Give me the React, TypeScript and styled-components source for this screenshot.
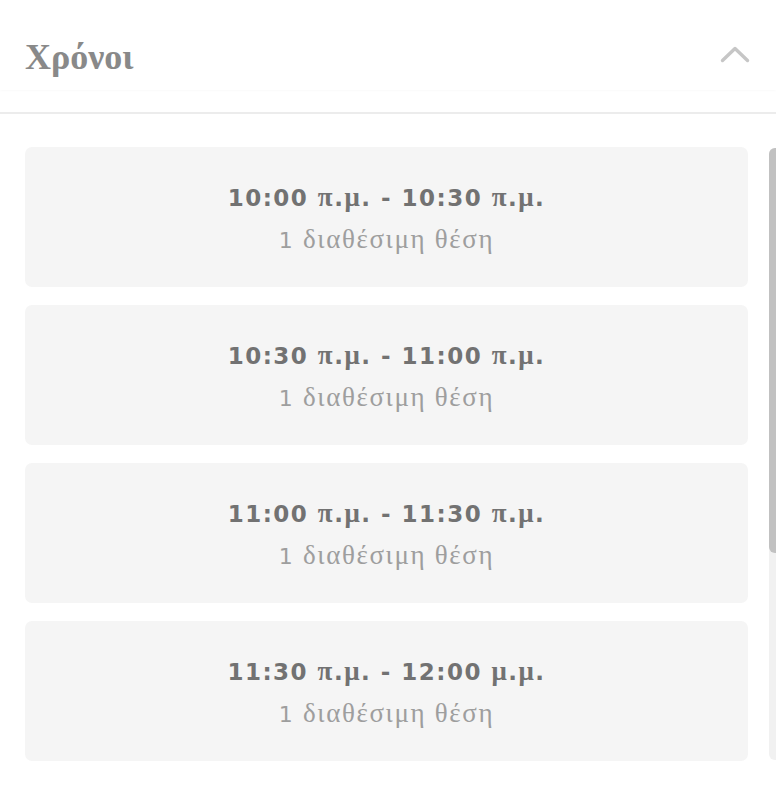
import React from "react";
import styled, { createGlobalStyle } from "styled-components";

const GlobalStyle = createGlobalStyle`
  html, body { margin: 0; padding: 0; background: #ffffff; }
  body { font-family: "DejaVu Sans", "Liberation Sans", sans-serif; }
  * { box-sizing: border-box; }
`;

const Panel = styled.div`
  width: 776px;
  display: flex;
  flex-direction: column;
  background: #ffffff;
`;

const Header = styled.div`
  height: 90px;
  padding: 23px 26px 0 25px;
  display: flex;
  align-items: center;
  justify-content: space-between;
  box-shadow: 0 1px 2px rgba(0, 0, 0, 0.025);
`;

const Title = styled.h2`
  margin: 0;
  font-family: "Liberation Serif", "Times New Roman", serif;
  font-weight: 700;
  font-size: 36px;
  color: #898989;
  line-height: 1;
`;

const ChevronButton = styled.button`
  border: 0;
  background: transparent;
  padding: 0;
  width: 30px;
  height: 18px;
  display: flex;
  align-items: center;
  justify-content: center;
  cursor: pointer;
  margin-top: -5px;
`;

const Divider = styled.div`
  margin-top: 22px;
  height: 2px;
  background: #ececec;
`;

const ListArea = styled.div`
  margin-top: 33px;
  height: 614px;
  display: flex;
  align-items: stretch;
`;

const List = styled.div`
  flex: 1;
  overflow: hidden;
  padding-left: 25px;
  padding-right: 21px;
  display: flex;
  flex-direction: column;
  gap: 18px;
`;

const ScrollTrack = styled.div`
  width: 7px;
  margin: 1px 0;
  border-radius: 6px 0 0 6px;
  background: #f1f1f1;
  display: flex;
  flex-direction: column;
`;

const ScrollThumb = styled.div`
  width: 100%;
  border-radius: 6px 0 0 6px;
  background: #c1c1c1;
`;

const SlotCard = styled.button`
  flex: 0 0 140px;
  width: 100%;
  border: 0;
  border-radius: 7px;
  background: #f5f5f5;
  display: flex;
  flex-direction: column;
  align-items: center;
  justify-content: center;
  gap: 10px;
  cursor: pointer;
  padding: 3px 0 0 0;
`;

const TimeLine = styled.div`
  font-family: "DejaVu Sans", "Liberation Sans", sans-serif;
  font-weight: 700;
  font-size: 23px;
  color: #727272;
  line-height: 32px;
  letter-spacing: 1.5px;
`;

const SeatsLine = styled.div`
  font-family: "DejaVu Sans", "Liberation Sans", sans-serif;
  font-weight: 400;
  font-size: 22px;
  color: #9e9e9e;
  line-height: 30px;
  letter-spacing: 1.6px;
`;

const Greek = styled.span<{ $size: number }>`
  font-family: "Liberation Serif", "Times New Roman", serif;
  font-size: ${(p) => p.$size}px;
`;

const greekRe = /([\u0370-\u03FF\u1F00-\u1FFF]+)/;

function Mixed({ text, size }: { text: string; size: number }) {
  const parts = text.split(greekRe);
  return (
    <>
      {parts.map((p, i) =>
        greekRe.test(p) ? (
          <Greek key={i} $size={size}>
            {p}
          </Greek>
        ) : (
          <React.Fragment key={i}>{p}</React.Fragment>
        )
      )}
    </>
  );
}

const slots = [
  "10:00 π.μ. - 10:30 π.μ.",
  "10:30 π.μ. - 11:00 π.μ.",
  "11:00 π.μ. - 11:30 π.μ.",
  "11:30 π.μ. - 12:00 μ.μ.",
];

const thumbRatio = 405 / 612;

export default function App() {
  return (
    <>
      <GlobalStyle />
      <Panel>
        <Header>
          <Title>Χρόνοι</Title>
          <ChevronButton aria-label="collapse">
            <svg width="30" height="18" viewBox="0 0 30 18">
              <path
                d="M2.5 15.5 L15 3.5 L27.5 15.5"
                fill="none"
                stroke="#c6c6c6"
                strokeWidth="3.4"
                strokeLinecap="round"
                strokeLinejoin="round"
              />
            </svg>
          </ChevronButton>
        </Header>
        <Divider />
        <ListArea>
          <List>
            {slots.map((s) => (
              <SlotCard key={s}>
                <TimeLine>
                  <Mixed text={s} size={27} />
                </TimeLine>
                <SeatsLine>
                  <Mixed text="1 διαθέσιμη θέση" size={27} />
                </SeatsLine>
              </SlotCard>
            ))}
          </List>
          <ScrollTrack>
            <ScrollThumb style={{ height: `${thumbRatio * 100}%` }} />
          </ScrollTrack>
        </ListArea>
      </Panel>
    </>
  );
}
